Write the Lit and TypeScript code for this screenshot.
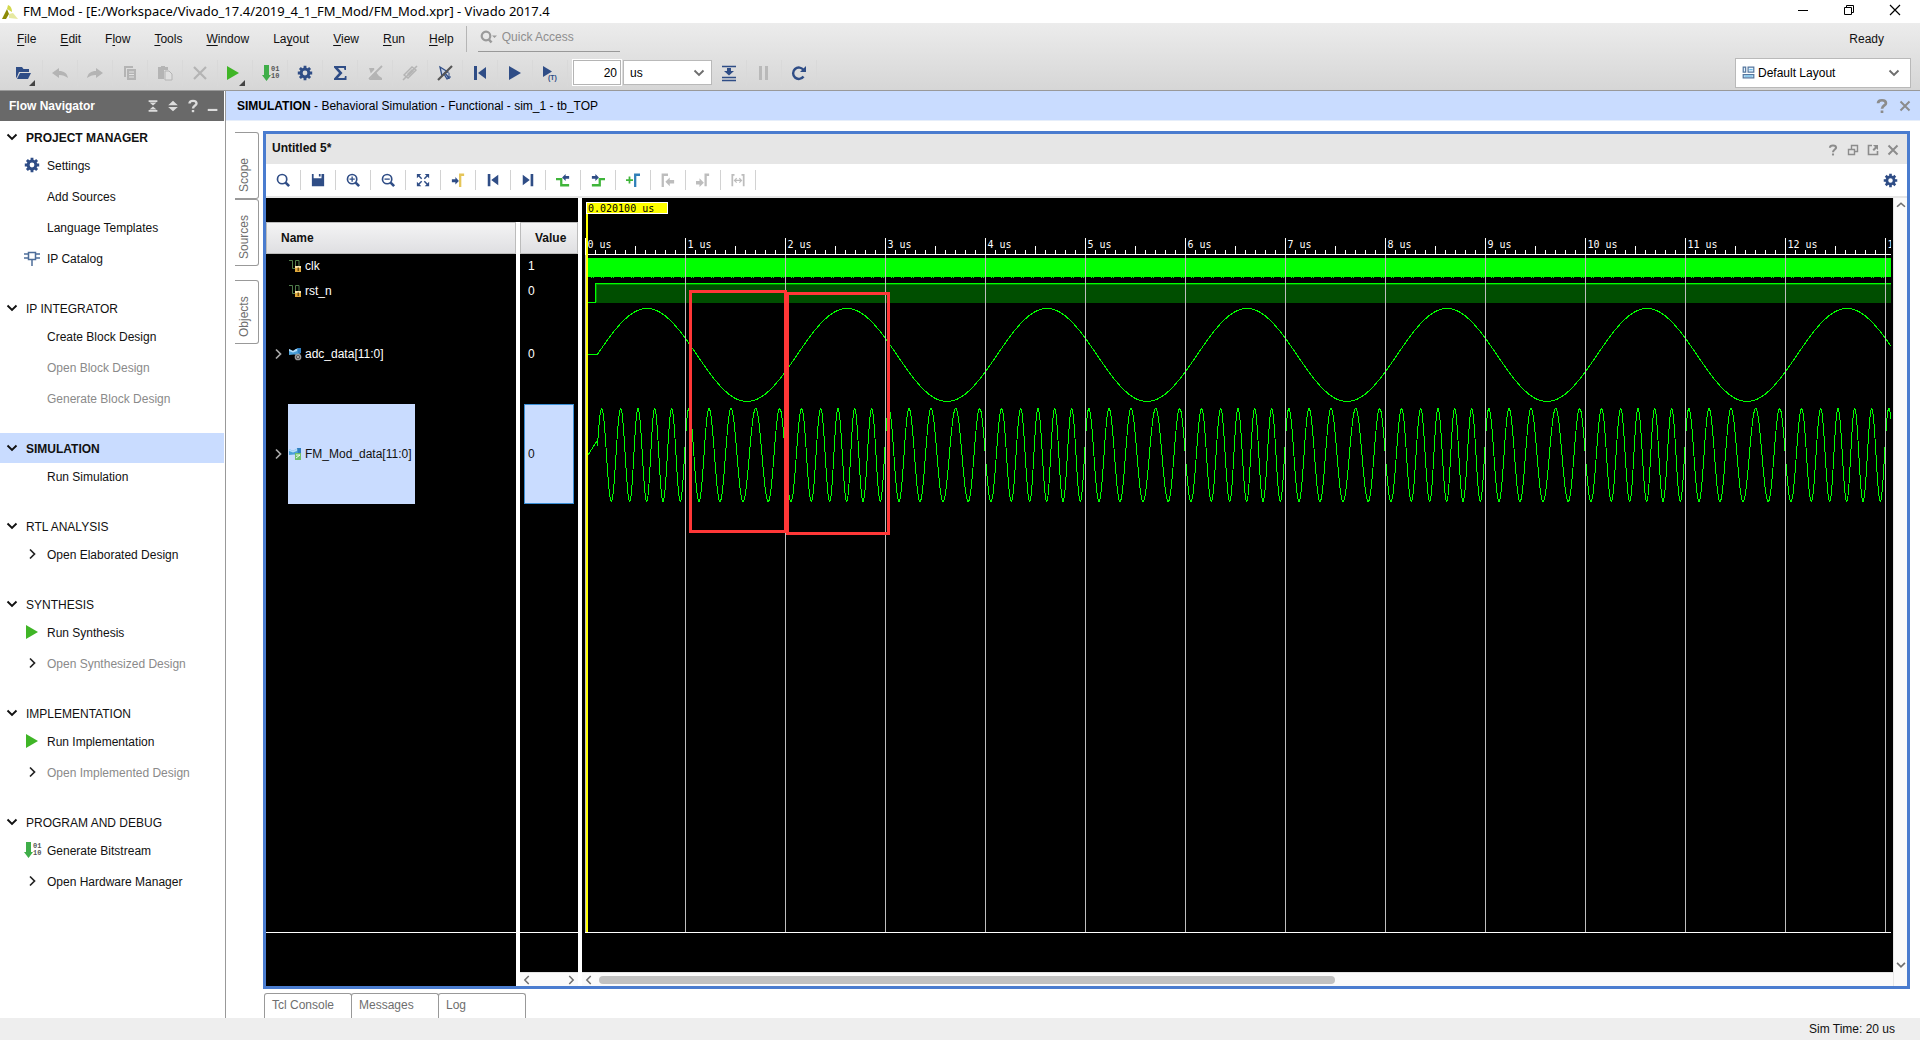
import { LitElement, html, svg, css, nothing } from "lit";
import { customElement } from "lit/decorators.js";
import { classMap } from "lit/directives/class-map.js";

const NAVY = "#2f4d86";
const GREY = "#b4b4b4";
const MID = "#8c8c8c";

const gear = (color: string) => svg`
  <g stroke=${color} fill="none">
    <circle cx="8" cy="8" r="3.9" stroke-width="3"/>
    ${[0, 45, 90, 135].map((a) => svg`
      <path d="M8 .8v2.6M8 12.6v2.6" stroke-width="2.8" transform="rotate(${a} 8 8)"/>`)}
  </g>`;

const lens = (inner: unknown) => svg`
  <circle cx="7" cy="7" r="5.3" fill="none" stroke=${NAVY} stroke-width="1.9"/>
  <path d="M11 11l4 4" stroke=${NAVY} stroke-width="3"/>${inner}`;

const digitalPulse = svg`
  <path d="M0 2.500h3.500v8h3M6.500 13V2.500H10V9" fill="none" stroke="#4f7d4a"/>
  <path d="M6 8h6v6H6z" fill="#e0a93c"/>
  <path d="M6 8h6v2H6z" fill="#f7e3ac"/>
  <path d="M8.500 9.500H10V13H8.500z" fill="#6b4a10"/>`;

const busRibbon = svg`
  <path d="M0 3l4 2 3-2 5-1v5L8 9 5 8.500 0 9z" fill="#4a9fd8"/>
  <path d="M0 3l4 2 3-2 3-1-2 3-4 1.500L0 5z" fill="#b5defa"/>
  <path d="M8 2h4v5H9z" fill="#2f7fc0"/>`;

const ICONS: Record<string, unknown> = {
  logo: svg`
    <path d="M6 1c3 1 4 4 4 7L5 5z" fill="#d3d84a"/>
    <path d="M5 5l2 5-3 5H0z" fill="#8c8a06"/>
    <path d="M7 10l4-1 5 6-9-1z" fill="#e6e9a0"/>`,
  minimize: svg`<path d="M3 8.500h10" stroke="#000"/>`,
  restore: svg`<path d="M3.500 5.500h7v7h-7zM5.500 5.500v-2h7v7h-2" fill="none" stroke="#000"/>`,
  closeWin: svg`<path d="M3 3l10 10M13 3L3 13" stroke="#000" stroke-width="1.200"/>`,
  open: svg`
    <path d="M1 2h6l1.500 2H14v3H4L2 12l-1 1z" fill=${NAVY}/>
    <path d="M5 8h11l-3 6H2z" fill=${NAVY}/>`,
  undo: svg`<path d="M0 8l7-5v3c5 0 8 2 9 7-3-2-5-3-9-3v3z" fill=${GREY}/>`,
  redo: svg`<path d="M16 8L9 3v3c-5 0-8 2-9 7 3-2 5-3 9-3v3z" fill=${GREY}/>`,
  copy: svg`
    <path d="M2 2v10h2V3h7V1H2z" fill=${GREY}/>
    <path d="M5 4h9v11H5z" fill=${GREY}/>
    <path d="M7 7h5M7 9.500h5M7 12h5" stroke="#e2e2e2"/>`,
  paste: svg`
    <path d="M1 2h3V1h4v1h3v3H7v9H1z" fill=${GREY}/>
    <path d="M8 6h4l3 3v6H8z" fill="#e0e0e0" stroke=${GREY}/>`,
  cut: svg`<path d="M2 2l12 12M14 2L2 14" stroke=${GREY} stroke-width="2.200"/>`,
  run: svg`<path d="M2 1l12 7-12 7z" fill="#3fb526"/>`,
  bits: svg`
    <path d="M2 0h5v10h2l-4.500 6L0 10h2z" fill="#3fae49"/>
    <text x="9" y="6" class="micro">01</text>
    <text x="9" y="13" class="micro">10</text>`,
  gear: gear(NAVY),
  sigma: svg`<path d="M2 1h12v4h-1.500L12 3H6l4.500 5L6 13h6.500l.5-2H14.500v4H2v-1.500L7 8 2 2.500z" fill=${NAVY}/>`,
  lint: svg`
    <path d="M2 3h5l1 3 4 5 3 2v2H2l3-3z" fill=${GREY}/>
    <path d="M1 13L13 0" stroke="#dedede" stroke-width="2"/>
    <path d="M2 14L15 1" stroke=${GREY} stroke-width="1.800"/>`,
  chip: svg`
    <path d="M2 10l8-8 4 3-8 8z" fill="none" stroke=${GREY} stroke-width="1.400"/>
    <path d="M5 9l5-5 2 2-5 5z" fill=${GREY}/>
    <path d="M1 15L15 1" stroke=${GREY} stroke-width="1.600"/>`,
  cursorOff: svg`
    <path d="M3 2l8 5-3 1 4 5-2 1-3-5-2 2z" fill="#c9d3e6" stroke=${NAVY} stroke-width="1.300"/>
    <path d="M12 8v6M10 12h4" stroke=${NAVY}/>
    <path d="M1 15L15 1" stroke="#555" stroke-width="2.200"/>`,
  first: svg`<path d="M2 1h3v14H2zM14 2v12L6 8z" fill=${NAVY}/>`,
  last: svg`<path d="M11 1h3v14h-3zM2 2v12l8-6z" fill=${NAVY}/>`,
  play: svg`<path d="M2 1l12 7-12 7z" fill=${NAVY}/>`,
  playTime: svg`
    <path d="M1 1l9 5.500L1 12z" fill=${NAVY}/>
    <text x="6" y="15" class="micro time">(T)</text>`,
  step: svg`
    <path d="M1 1.500h14M1 12.500h14M1 15.500h14" stroke=${NAVY} stroke-width="1.500"/>
    <path d="M6 3h4v3h3l-5 4.500L3 6h3z" fill=${NAVY}/>`,
  pause: svg`<path d="M3 1h3v14H3zM9 1h3v14H9z" fill="#b9b9b9"/>`,
  reload: svg`
    <path d="M12.500 11.500A5.700 5.700 0 1 1 12.500 5" fill="none" stroke=${NAVY} stroke-width="2.400"/>
    <path d="M15 1v6H9z" fill=${NAVY}/>`,
  layout: svg`
    <path d="M1.500 1.500h3v6h-3zM7.500 1.500h7v6h-7zM1.500 10.500h13v4h-13z" fill="#e6f4ff" stroke="#55779f" stroke-width="1.500"/>
    <path d="M9 4.500h4M3 12.500h10" stroke="#6dbbe8" stroke-width="1.500"/>`,
  quick: svg`
    <circle cx="6" cy="7" r="4.300" fill="none" stroke="#9a9a9a" stroke-width="2.200"/>
    <path d="M8.500 10l3 3.500" stroke="#9a9a9a" stroke-width="2.600"/>
    <path d="M12 6.500h5L14.500 9z" fill="#9a9a9a"/>`,
  collapse: svg`
    <path d="M3 2.500h10M3 13.500h10" stroke="#dcdcdc" stroke-width="2"/>
    <path d="M4 4h8L8 7.500zM4 12h8L8 8.500z" fill="#dcdcdc"/>`,
  expand: svg`<path d="M2.500 7h11L8 2zM2.500 9h11L8 14z" fill="#dcdcdc"/>`,
  help: svg`
    <path d="M4.500 5.500C4.500 2 11.500 2 11.500 5.500 11.500 7.500 8 7.500 8 10.500" fill="none" stroke="currentColor" stroke-width="2.400"/>
    <path d="M6.800 12h2.400v2.200H6.800z" fill="currentColor"/>`,
  dash: svg`<path d="M2 12.500h11" stroke="#dcdcdc" stroke-width="2.400"/>`,
  close: svg`<path d="M3.500 3.500l9 9M12.500 3.500l-9 9" stroke=${MID} stroke-width="2"/>`,
  float: svg`<path d="M3.500 7.500h6v5h-6zM6.500 7V3.500h6v6H10" fill="none" stroke=${MID} stroke-width="1.400"/>`,
  popout: svg`
    <path d="M7 3.500H3.500v9h9V9" fill="none" stroke=${MID} stroke-width="1.600"/>
    <path d="M8 3h5v5l-1.500-1.500L9 9 7.500 7.500 10 5z" fill=${MID}/>`,
  search: lens(nothing),
  zoomIn: lens(svg`<path d="M4 7h6M7 4v6" stroke=${NAVY} stroke-width="1.500"/>`),
  zoomOut: lens(svg`<path d="M4 7h6" stroke=${NAVY} stroke-width="1.500"/>`),
  save: svg`<path d="M1 1h2v5h9V1h3v14H1zM9 1h2v3H9z" fill=${NAVY}/>`,
  fit: svg`
    <path d="M1 1h5L1 6zM15 1h-5l5 5zM1 15h5l-5-5zM15 15h-5l5-5z" fill=${NAVY}/>
    <path d="M2 2l4.500 4.500M14 2L9.500 6.500M2 14l4.500-4.500M14 14L9.500 9.500" stroke=${NAVY} stroke-width="1.700"/>`,
  toCursor: svg`
    <path d="M1 7h4V4.500L9 9l-4 4v-2.500H1z" fill=${NAVY}/>
    <path d="M10.500 16V2H15" fill="none" stroke="#e5c558" stroke-width="2.600"/>`,
  prevEdge: svg`
    <path d="M0 7h6v7h9" fill="none" stroke="#3fb53a" stroke-width="2.600"/>
    <path d="M7 5l4-4v2.500h4v3h-4V9z" fill=${NAVY}/>`,
  nextEdge: svg`
    <path d="M1 14h9V7h6" fill="none" stroke="#3fb53a" stroke-width="2.600"/>
    <path d="M9 5L5 1v2.500H1v3h4V9z" fill=${NAVY}/>`,
  addMarker: svg`
    <path d="M0 8h8M4 4v8" stroke="#3fb53a" stroke-width="2"/>
    <path d="M10.500 16V2H16" fill="none" stroke="#2f7fb8" stroke-width="2.600"/>`,
  prevMarker: svg`
    <path d="M2 16V2h6" fill="none" stroke="#bdbdbd" stroke-width="2.600"/>
    <path d="M5 10l5-5v3h5v4h-5v3z" fill="#bdbdbd"/>`,
  nextMarker: svg`
    <path d="M11 15V2h4" fill="none" stroke="#bdbdbd" stroke-width="2.600"/>
    <path d="M9 11L4 6v3H0v4h4v3z" fill="#bdbdbd"/>`,
  swap: svg`
    <path d="M1.500 1v14M14.500 1v14M1 2h3M12 2h3" stroke="#bdbdbd" stroke-width="2" fill="none"/>
    <path d="M4 8.500h8M6.500 6L4 8.500 6.500 11M9.500 6l2.500 2.500L9.500 11" stroke="#bdbdbd" fill="none" stroke-width="1.400"/>`,
  ip: svg`
    <path d="M4.500 2.500h7v7h-7z" fill="none" stroke="#4d6d99" stroke-width="1.500"/>
    <path d="M0 4h4M0 8h4M12 4h4M12 8h4M8 10v6" stroke="#4d6d99" stroke-width="1.500"/>`,
  pulse: digitalPulse,
  bus: svg`${busRibbon}
    <circle cx="9" cy="11" r="2.600" fill="#333" stroke="#999" stroke-width="1.500"/>
    <circle cx="9" cy="11" r="1" fill="#ccc"/>`,
  busOut: svg`${busRibbon}
    <path d="M6 7h6v7H6z" fill="#6fc06a"/><path d="M7 9h4M7 12l4-3" stroke="#f0fff0"/>`,
  down: svg`<path d="M3.500 5.500L8 10l4.500-4.500" fill="none" stroke="currentColor" stroke-width="1.900"/>`,
  up: svg`<path d="M3.500 10L8 6l4.500 4" fill="none" stroke="currentColor" stroke-width="1.900"/>`,
  right: svg`<path d="M6 3.500L10.500 8 6 12.500" fill="none" stroke="currentColor" stroke-width="1.700"/>`,
  left: svg`<path d="M10 3.500L5.500 8l4.500 4.500" fill="none" stroke="currentColor" stroke-width="1.700"/>`,
};

const icon = (name: string, size = 16) => html`
  <svg class="icon" width=${size} height=${size} viewBox="0 0 16 16" aria-hidden="true">${ICONS[name]}</svg>`;

const shared = css`
  * { box-sizing: border-box; }
  button {
    font: inherit;
    color: inherit;
    background: none;
    border: 0;
    padding: 0;
    margin: 0;
    text-align: left;
    display: inline-flex;
    align-items: center;
  }
  .icon { display: block; flex: none; overflow: visible; }
  .micro { font: bold 7px "Liberation Mono", monospace; fill: #555; }
  .time { fill: #2f4d86; font-family: "Liberation Sans", sans-serif; }
`;

interface NavItem { label: string; icon?: string; off?: boolean }
interface NavSection { title: string; bold?: boolean; active?: boolean; items: NavItem[] }

const SECTIONS: NavSection[] = [
  { title: "PROJECT MANAGER", bold: true, items: [
    { label: "Settings", icon: "gear" },
    { label: "Add Sources" },
    { label: "Language Templates" },
    { label: "IP Catalog", icon: "ip" },
  ] },
  { title: "IP INTEGRATOR", items: [
    { label: "Create Block Design" },
    { label: "Open Block Design", off: true },
    { label: "Generate Block Design", off: true },
  ] },
  { title: "SIMULATION", bold: true, active: true, items: [{ label: "Run Simulation" }] },
  { title: "RTL ANALYSIS", items: [{ label: "Open Elaborated Design", icon: "right" }] },
  { title: "SYNTHESIS", items: [
    { label: "Run Synthesis", icon: "run" },
    { label: "Open Synthesized Design", icon: "right", off: true },
  ] },
  { title: "IMPLEMENTATION", items: [
    { label: "Run Implementation", icon: "run" },
    { label: "Open Implemented Design", icon: "right", off: true },
  ] },
  { title: "PROGRAM AND DEBUG", items: [
    { label: "Generate Bitstream", icon: "bits" },
    { label: "Open Hardware Manager", icon: "right" },
  ] },
];

@customElement("flow-navigator")
class FlowNavigator extends LitElement {
  static styles = [shared, css`
    :host {
      display: block;
      width: 226px;
      flex: none;
      background: #fff;
      border-right: 1px solid #999;
      padding-right: 1px;
    }
    .head {
      display: flex;
      align-items: center;
      height: 30px;
      padding: 0 1px 0 9px;
      background: #696969;
      color: #fff;
      font-weight: bold;
    }
    .head .name { flex: 1; }
    .head button { width: 20px; justify-content: center; color: #dcdcdc; }
    .sections { display: flex; flex-direction: column; gap: 17px; padding: 1px 0 17px; }
    .title {
      display: flex;
      width: 100%;
      height: 30px;
      gap: 6px;
      padding: 2px 4px 0;
      font-weight: normal;
    }
    .title .icon { margin-bottom: 2px; }
    .bold { font-weight: bold; }
    .active { background: #c9dcff; }
    ul { list-style: none; margin: 0; padding: 0; }
    li { height: 31px; }
    .item { height: 28px; width: 100%; padding-left: 24px; gap: 7px; }
    .slot { width: 16px; padding-bottom: 2px; color: #222; }
    .off .text { color: #8a8a8a; }
    h3 { margin: 0; font: inherit; }
  `];

  render() {
    return html`
      <div class="head">
        <span class="name">Flow Navigator</span>
        <button aria-label="Collapse all">${icon("collapse", 14)}</button>
        <button aria-label="Expand all">${icon("expand", 14)}</button>
        <button aria-label="Help">${icon("help")}</button>
        <button aria-label="Minimize">${icon("dash", 14)}</button>
      </div>
      <nav class="sections" aria-label="Flow">
        ${SECTIONS.map((s) => html`
          <section>
            <h3><button class=${classMap({ title: true, bold: !!s.bold, active: !!s.active })}>
              ${icon("down")}<span>${s.title}</span>
            </button></h3>
            <ul>${s.items.map((i) => html`
              <li><button class=${classMap({ item: true, off: !!i.off })}>
                <span class="slot">${i.icon ? icon(i.icon) : nothing}</span>
                <span class="text">${i.label}</span>
              </button></li>`)}
            </ul>
          </section>`)}
      </nav>`;
  }
}

/* Wave geometry: 100 px per microsecond, time zero 3 px from the left edge. */
const T0 = 3;
const PX_PER_US = 100;
const SPAN_US = 20;
const END = T0 + SPAN_US * PX_PER_US;

/* Alternating crests and troughs of the FM output over one 2 us modulation period, in ns. */
const EXTREMA_NS = [167, 263, 357, 447, 530, 617, 697, 780, 867, 953, 1038, 1140, 1240, 1350,
  1460, 1580, 1707, 1833, 1947, 2060];

const sinePath = () => {
  let d = "M6 156.5H12";
  for (let x = 15; x <= END; x++) {
    d += `L${x} ${(157 - 46.5 * Math.sin(((x - 15) / 200) * 2 * Math.PI)).toFixed(1)}`;
  }
  return d;
};

const fmPath = () => {
  const pts: number[] = [];
  for (let p = 0; p <= SPAN_US / 2; p++) {
    EXTREMA_NS.forEach((ns) => pts.push(T0 + (ns + p * 2000) / 10));
  }
  let d = "M6 257L15 243";
  let i = 0;
  for (let x = 15.5; x <= END; x += 0.5) {
    while (i < pts.length - 2 && pts[i + 1] < x) i++;
    const a = pts[i], b = pts[i + 1];
    const phase = i + (x - a) / (b - a);
    d += `L${x} ${(257 - 46.5 * Math.cos(phase * Math.PI)).toFixed(1)}`;
  }
  return d;
};

const SINE = sinePath();
const FM = fmPath();

@customElement("wave-view")
class WaveView extends LitElement {
  static styles = [shared, css`
    :host { display: flex; flex-direction: column; background: #000; min-width: 0; }
    .plot { flex: 1; min-height: 560px; border-bottom: 1px solid #fff; margin: 0 2px 0 3px; display: flex; }
    .plot svg { display: block; flex: 1; min-width: 0; width: 100%; height: auto; overflow: hidden; margin-left: -3px; }
    .below { height: 39px; }
    .stamp { font: 10px "DejaVu Sans Mono", "Liberation Mono", monospace; }
  `];

  private watcher = new ResizeObserver(() => this.requestUpdate());

  connectedCallback() {
    super.connectedCallback();
    this.watcher.observe(this);
  }

  disconnectedCallback() {
    this.watcher.disconnect();
    super.disconnectedCallback();
  }

  render() {
    /* Only the microseconds that fit in the current width get gridlines and labels. */
    const last = Math.min(SPAN_US, Math.max(1, Math.floor((this.clientWidth - 6) / PX_PER_US)));
    const us = Array.from({ length: last + 1 }, (_, n) => n);
    const tenths = Array.from({ length: last * 10 + 10 }, (_, n) => n).filter((n) => n % 10);
    return html`
      <div class="plot">
        <svg role="img" aria-label="Waveforms" shape-rendering="crispEdges">
          <path d="M3 56.500H${END}" stroke="#fff"/>
          ${tenths.map((n) => svg`<path d="M${T0 + n * 10 + 0.5} ${n % 5 ? 52 : 48}V56" stroke="#fff"/>`)}
          <rect x="6" y="60" width=${END - 6} height="19" fill="#0f0"/>
          <path d="M9 79.500H${END}" stroke="#0f0" stroke-dasharray="1 1 1 7"/>
          <rect x="13" y="85" width=${END - 13} height="20" fill="#004e00"/>
          <path d="M14.500 104V86.500H${END}" fill="none" stroke="#008a00"/>
          <path d="M6 104.500H13.500V85.500H${END}" fill="none" stroke="#0f0"/>
          <path d=${SINE} fill="none" stroke="#0f0"/>
          <path d=${FM} fill="none" stroke="#0f0"/>
          ${us.map((n) => {
            const x = T0 + n * PX_PER_US + 0.5;
            return svg`
              <line x1=${x} x2=${x} y1="57" y2="100%" stroke="#bebebe"/>
              <line x1=${x} x2=${x} y1="40" y2="57" stroke="#fff"/>
              <text class="stamp" x=${x + 2} y="50" fill="#fff">${n} us</text>`;
          })}
          <line x1="5" x2="5" y1="16" y2="100%" stroke="#ff0" stroke-width="2"/>
          <rect x="4.500" y="4.500" width="81" height="11" fill="#ff0" stroke="#fff"/>
          <text class="stamp" x="6" y="14" fill="#000">0.020100 us</text>
          <g fill="none" stroke="#ff3737" stroke-width="3">
            <rect x="108.500" y="93.500" width="95" height="240"/>
            <rect x="205.500" y="95.500" width="101" height="240"/>
          </g>
        </svg>
      </div>
      <div class="below"></div>`;
  }
}

interface Signal { name: string; icon: string; value: string; tall?: boolean; selected?: boolean }

const SIGNALS: Signal[] = [
  { name: "clk", icon: "pulse", value: "1" },
  { name: "rst_n", icon: "pulse", value: "0" },
  { name: "adc_data[11:0]", icon: "bus", value: "0", tall: true },
  { name: "FM_Mod_data[11:0]", icon: "busOut", value: "0", tall: true, selected: true },
];

const WAVE_TOOLS = [
  ["search", "Find"], ["save", "Save"], ["zoomIn", "Zoom in"], ["zoomOut", "Zoom out"],
  ["fit", "Zoom fit"], ["toCursor", "Go to cursor"], ["first", "Go to start"], ["last", "Go to end"],
  ["prevEdge", "Previous transition"], ["nextEdge", "Next transition"], ["addMarker", "Add marker"],
  ["prevMarker", "Previous marker"], ["nextMarker", "Next marker"], ["swap", "Swap cursors"],
];

@customElement("wave-window")
class WaveWindow extends LitElement {
  static styles = [shared, css`
    :host {
      display: flex;
      flex-direction: column;
      flex: 1;
      min-width: 0;
      border: 3px solid #4a7ccf;
      background: #fff;
    }
    .head { display: flex; align-items: center; height: 30px; padding: 0 4px 0 6px; background: #e6e6e6; }
    .head .name { flex: 1; font-weight: bold; padding-bottom: 3px; }
    .head button { width: 20px; justify-content: center; color: #8c8c8c; padding-top: 2px; }
    .tools { display: flex; align-items: center; height: 34px; border-bottom: 2px solid #e6e6e6; }
    .tool { width: 35px; height: 20px; justify-content: center; border-right: 1px solid #d2d2d2; }
    .prefs { margin-left: auto; margin-right: 9px; }
    .body { display: grid; grid-template-columns: 312px minmax(0, 1fr) 14px; flex: 1; }
    .signals { display: flex; flex-direction: column; background: #000; color: #fff; }
    .spacer { height: 24px; }
    table { border-collapse: separate; border-spacing: 0; table-layout: fixed; width: 312px; }
    .cname { width: 250px; }
    th, td { padding: 0; text-align: left; }
    th { height: 32px; }
    th div {
      height: 32px;
      line-height: 30px;
      padding-left: 14px;
      color: #111;
      border: 1px solid #bcbcbc;
      background: linear-gradient(#f4f4f4, #dfdfe2);
    }
    .val { border-left: 4px solid #fff; }
    tr { height: 25px; }
    tr.tall { height: 100px; }
    .sig { display: flex; align-items: center; padding-left: 4px; height: 100%; }
    .twist { width: 18px; height: 16px; color: #aaa; }
    .label { display: flex; align-items: center; height: 25px; padding: 0 3px 2px 1px; }
    .num { display: flex; align-items: center; height: 25px; margin: 0 4px; padding: 0 0 2px 4px; }
    .tall .label { height: 100px; padding-bottom: 0; }
    .tall .num { height: 100px; padding-bottom: 0; }
    .selected .label { background: #c9dcff; color: #111; }
    .selected .num { background: #c9dcff; color: #111; border: 1px solid #3a8fd6; padding-left: 3px; }
    .rest { flex: 1; display: grid; grid-template-columns: 250px 58px; column-gap: 4px; background: #fff; }
    .col { background: #000; display: flex; flex-direction: column; }
    .fill { flex: 1; border-bottom: 1px solid #fff; }
    .foot { height: 53px; }
    .foot.short { height: 39px; }
    .hbar { display: flex; align-items: center; height: 14px; background: #fafafa; border-top: 1px solid #e2e2e2; color: #6e6e6e; }
    .track { flex: 1; height: 8px; padding: 0 3px; }
    .thumb { height: 8px; width: 57%; border-radius: 4px; background: #c1c1c1; }
    .waves { display: flex; flex-direction: column; border-left: 4px solid #fff; }
    wave-view { flex: 1; }
    .waves .hbar { margin-right: -14px; }
    .vbar {
      display: flex;
      flex-direction: column;
      justify-content: space-between;
      background: #fafafa;
      border-left: 1px solid #e6e6e6;
      padding-bottom: 14px;
      color: #6e6e6e;
    }
    .vbar button, .hbar button { width: 14px; height: 14px; justify-content: center; }
  `];

  render() {
    return html`
      <div class="head">
        <span class="name">Untitled 5*</span>
        <button aria-label="Help">${icon("help", 14)}</button>
        <button aria-label="Float">${icon("float")}</button>
        <button aria-label="Pop out">${icon("popout")}</button>
        <button aria-label="Close">${icon("close")}</button>
      </div>
      <div class="tools" role="toolbar">
        ${WAVE_TOOLS.map(([name, label]) => html`
          <button class="tool" aria-label=${label}>${icon(name, 14)}</button>`)}
        <button class="prefs" aria-label="Wave settings">${icon("gear", 15)}</button>
      </div>
      <div class="body">
        <div class="signals">
          <div class="spacer"></div>
          <table>
            <colgroup><col class="cname"><col></colgroup>
            <thead><tr><th><div>Name</div></th><th class="val"><div>Value</div></th></tr></thead>
            <tbody>
              ${SIGNALS.map((s) => html`
                <tr class=${classMap({ tall: !!s.tall, selected: !!s.selected })}>
                  <td><div class="sig">
                    ${s.tall
                      ? html`<button class="twist" aria-label="Expand ${s.name}">${icon("right")}</button>`
                      : html`<span class="twist"></span>`}
                    <span class="label">${icon(s.icon)}<span>${s.name}</span></span>
                  </div></td>
                  <td class="val"><div class="num">${s.value}</div></td>
                </tr>`)}
            </tbody>
          </table>
          <div class="rest">
            <div class="col"><div class="fill"></div><div class="foot"></div></div>
            <div class="col">
              <div class="fill"></div><div class="foot short"></div>
              <div class="hbar">
                <button aria-label="Scroll values left">${icon("left", 14)}</button>
                <div class="track"></div>
                <button aria-label="Scroll values right">${icon("right", 14)}</button>
              </div>
            </div>
          </div>
        </div>
        <div class="waves">
          <wave-view></wave-view>
          <div class="hbar">
            <button aria-label="Scroll waves left">${icon("left", 14)}</button>
            <div class="track"><div class="thumb"></div></div>
            <button aria-label="Scroll waves right">${icon("right", 14)}</button>
          </div>
        </div>
        <div class="vbar">
          <button aria-label="Scroll up">${icon("up", 14)}</button>
          <button aria-label="Scroll down">${icon("down", 14)}</button>
        </div>
      </div>`;
  }
}

/* Menu captions; the middle part is the underlined access key. */
const MENUS = [
  ["", "F", "ile"], ["", "E", "dit"], ["F", "l", "ow"], ["", "T", "ools"], ["", "W", "indow"],
  ["La", "y", "out"], ["", "V", "iew"], ["", "R", "un"], ["", "H", "elp"],
];

const TOOLS = [
  ["open", "Open", "more"], ["undo", "Undo", ""], ["redo", "Redo", ""], ["copy", "Copy", ""],
  ["paste", "Paste", ""], ["cut", "Delete", ""], ["run", "Run", "more"], ["bits", "Generate bitstream", ""],
  ["gear", "Settings", ""], ["sigma", "Report", ""], ["lint", "Lint off", ""], ["chip", "Probe off", ""],
  ["cursorOff", "Cursor off", ""], ["first", "Restart", ""], ["play", "Run all", ""], ["playTime", "Run for time", ""],
];

@customElement("app-root")
class AppRoot extends LitElement {
  static styles = [shared, css`
    :host {
      display: flex;
      flex-direction: column;
      min-height: 100vh;
      background: #fff;
      color: #111;
      font: 12px/16px "Liberation Sans", Arial, sans-serif;
    }
    .titlebar { display: flex; align-items: center; height: 23px; padding: 0 17px 0 2px; gap: 5px; }
    .titlebar h1 { flex: 1; margin: 0; font: 13px/18px "Noto Sans", "Open Sans", sans-serif; color: #000; padding-bottom: 1px; }
    .winbuttons { display: flex; gap: 30px; padding-bottom: 4px; }
    .chrome { background: linear-gradient(#ececec, #d6d6d6); border-bottom: 1px solid #999; height: 68px; }
    .menurow { display: flex; align-items: center; height: 32px; padding: 0 36px 0 17px; }
    .menus { display: flex; gap: 24px; }
    .menus u { text-underline-offset: 2px; }
    .menusep { width: 1px; height: 26px; background: #b5b5b5; margin: 0 11px 0 12px; }
    .quick { display: flex; align-items: center; gap: 6px; width: 142px; height: 26px; border-bottom: 1px solid #999; padding: 0 2px 4px; }
    .quick input { flex: 1; min-width: 0; border: 0; background: none; font: inherit; padding: 0; outline: 0; }
    .quick input::placeholder { color: #8e8e8e; opacity: 1; }
    .ready { margin-left: auto; }
    .toolrow { display: flex; align-items: center; height: 35px; padding: 0 9px 0 8px; }
    .tool { position: relative; width: 35px; height: 26px; justify-content: center; border-right: 1px solid #d9d9d9; }
    .tool.more { padding-right: 4px; }
    .tool.more::after {
      content: "";
      position: absolute;
      right: 7px;
      bottom: 0;
      border: 3px solid transparent;
      border-right-color: #444;
      border-bottom-color: #444;
    }
    .amount {
      width: 48px;
      height: 25px;
      margin: 0 2px 0 5px;
      padding: 0 3px;
      border: 1px solid #b4b4b4;
      outline: 1px solid #fff;
      background: #fff;
      font: inherit;
      text-align: right;
      color: #000;
    }
    .pick { display: grid; align-items: center; height: 25px; background: #fff; border: 1px solid #b9b9b9; color: #000; }
    .pick > * { grid-area: 1 / 1; }
    .pick select {
      appearance: none;
      border: 0;
      background: none;
      font: inherit;
      color: inherit;
      width: 100%;
      height: 100%;
      padding: 0 6px;
      outline: 0;
    }
    .pick .icon { pointer-events: none; color: #6e6e6e; }
    .pick .arrow { justify-self: end; margin-right: 4px; }
    .unit { width: 89px; }
    .preset { width: 176px; height: 30px; margin-left: auto; }
    .preset select { padding-left: 22px; }
    .preset .glyph { margin-left: 6px; }
    .preset .arrow { margin-right: 8px; }
    .main { display: flex; flex: 1; }
    .work { display: flex; flex-direction: column; flex: 1; min-width: 0; }
    .simhead {
      display: flex;
      align-items: center;
      height: 30px;
      padding: 0 4px 0 11px;
      background: #c9dcff;
      border-bottom: 1px solid #e6eefa;
      color: #000;
    }
    .simhead h2 { flex: 1; margin: 0; font: inherit; }
    .simhead button { width: 23px; justify-content: center; color: #8c8c8c; }
    .stage { display: flex; flex: 1; padding: 10px 10px 4px 9px; }
    .side { display: flex; flex-direction: column; width: 24px; margin: 1px 4px 0 0; flex: none; }
    .vtab {
      writing-mode: vertical-rl;
      rotate: 180deg;
      width: 24px;
      height: 67px;
      padding-top: 6px;
      color: #6e6e6e;
      border: 1px solid #999;
      border-right: 0;
      border-radius: 3px 0 0 3px;
      justify-content: flex-start;
      align-items: center;
    }
    .vtab span { padding-left: 6px; }
    .vtab.apart { margin-top: 14px; height: 64px; }
    .tabs { display: flex; padding-left: 38px; height: 25px; }
    .tab {
      width: 88px;
      margin-right: -1px;
      height: 25px;
      padding: 0 7px 2px;
      color: #6e6e6e;
      border: 1px solid #999;
      border-bottom: 0;
      border-radius: 3px 3px 0 0;
    }
    .status { display: flex; justify-content: flex-end; align-items: center; height: 22px; background: #eee; padding: 0 25px; }
  `];

  render() {
    return html`
      <header>
        <div class="titlebar">
          ${icon("logo")}
          <h1>FM_Mod - [E:/Workspace/Vivado_17.4/2019_4_1_FM_Mod/FM_Mod.xpr] - Vivado 2017.4</h1>
          <div class="winbuttons">
            <button aria-label="Minimize">${icon("minimize")}</button>
            <button aria-label="Restore">${icon("restore")}</button>
            <button aria-label="Close">${icon("closeWin")}</button>
          </div>
        </div>
        <div class="chrome">
          <div class="menurow">
            <div class="menus">
              ${MENUS.map(([a, key, b]) => html`<button><span>${a}<u>${key}</u>${b}</span></button>`)}
            </div>
            <div class="menusep"></div>
            <label class="quick">${icon("quick")}<input type="text" placeholder="Quick Access" aria-label="Quick Access"></label>
            <span class="ready">Ready</span>
          </div>
          <div class="toolrow">
            ${TOOLS.map(([name, label, more]) => html`
              <button class="tool ${more}" aria-label=${label}>${icon(name)}</button>`)}
            <input class="amount" type="text" value="20" aria-label="Run time">
            <div class="pick unit">
              <select aria-label="Time unit"><option>us</option></select>
              <svg class="icon arrow" width="16" height="16" viewBox="0 0 16 16" aria-hidden="true">${ICONS.down}</svg>
            </div>
            <button class="tool" aria-label="Step">${icon("step")}</button>
            <button class="tool" aria-label="Break">${icon("pause")}</button>
            <button class="tool" aria-label="Relaunch">${icon("reload")}</button>
            <div class="pick preset">
              <svg class="icon glyph" width="13" height="13" viewBox="0 0 16 16" aria-hidden="true">${ICONS.layout}</svg>
              <select aria-label="Window layout"><option>Default Layout</option></select>
              <svg class="icon arrow" width="16" height="16" viewBox="0 0 16 16" aria-hidden="true">${ICONS.down}</svg>
            </div>
          </div>
        </div>
      </header>
      <div class="main">
        <flow-navigator></flow-navigator>
        <div class="work">
          <div class="simhead">
            <h2><b>SIMULATION</b> - Behavioral Simulation - Functional - sim_1 - tb_TOP</h2>
            <button aria-label="Help">${icon("help", 18)}</button>
            <button aria-label="Close">${icon("close")}</button>
          </div>
          <div class="stage">
            <div class="side">
              <button class="vtab"><span>Scope</span></button>
              <button class="vtab"><span>Sources</span></button>
              <button class="vtab apart"><span>Objects</span></button>
            </div>
            <wave-window></wave-window>
          </div>
          <div class="tabs">
            <button class="tab">Tcl Console</button>
            <button class="tab">Messages</button>
            <button class="tab">Log</button>
          </div>
        </div>
      </div>
      <footer class="status">Sim Time: 20 us</footer>`;
  }
}
